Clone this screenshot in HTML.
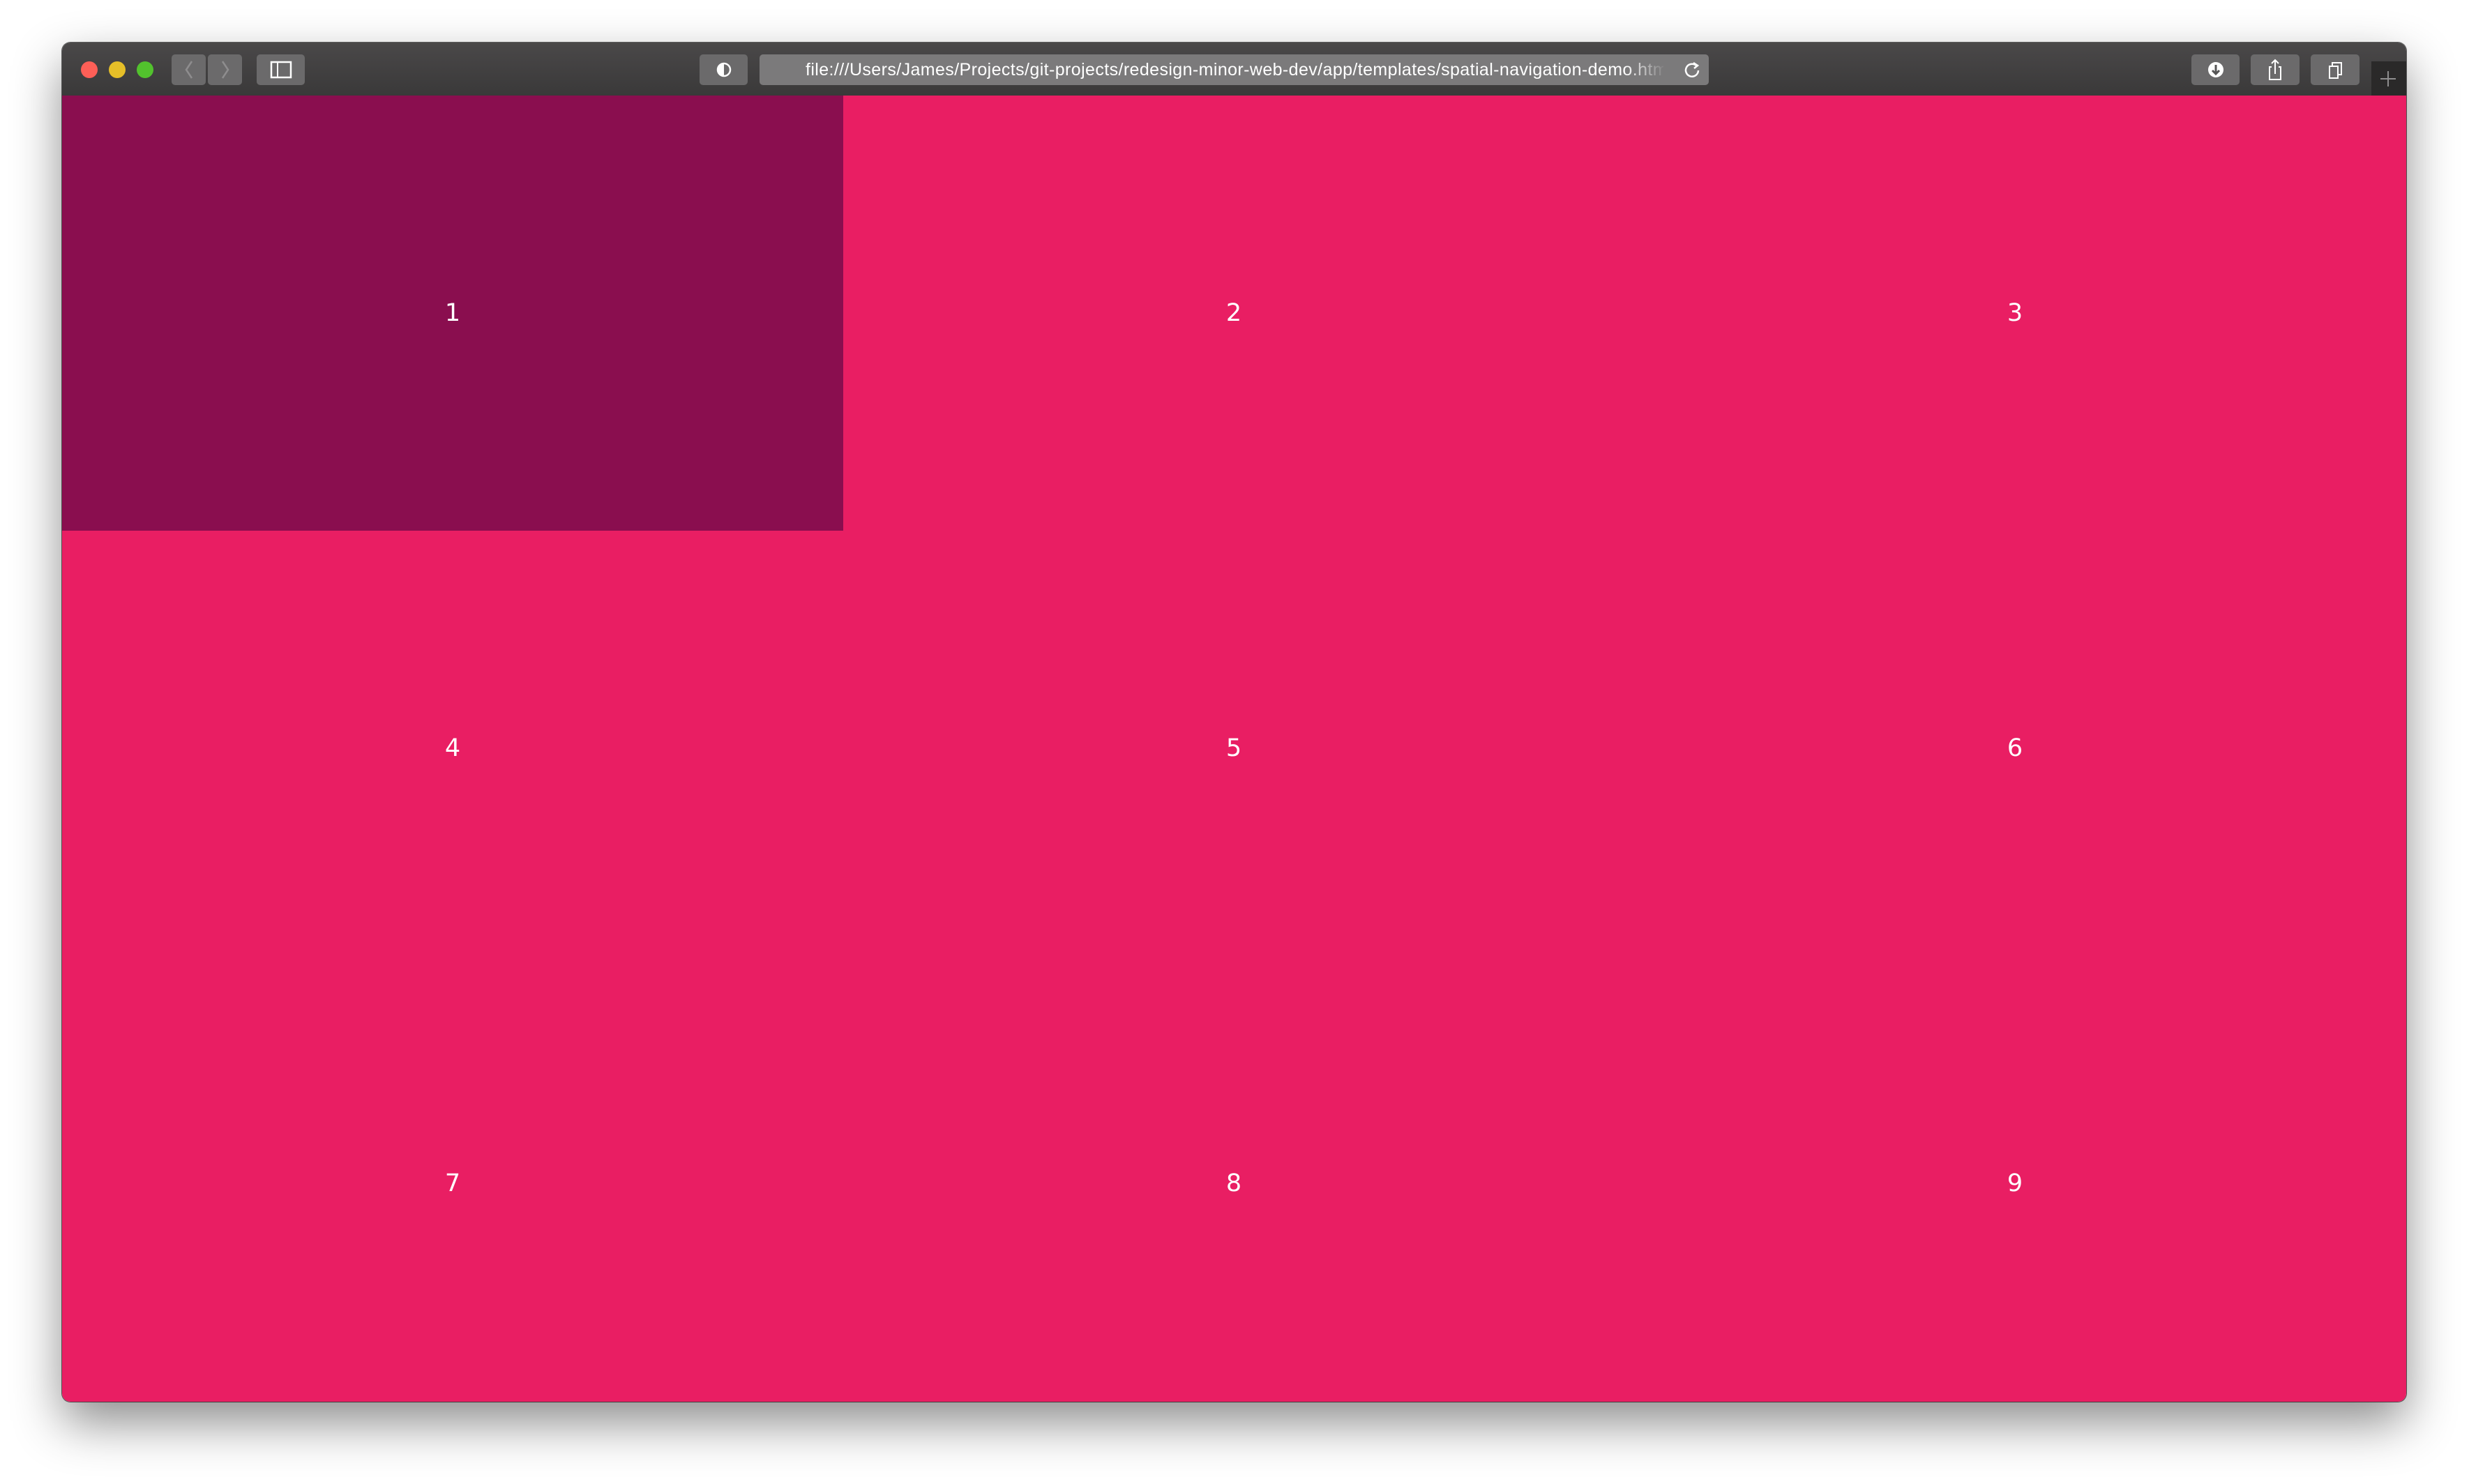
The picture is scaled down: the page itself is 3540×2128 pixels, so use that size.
<!DOCTYPE html>
<html><head><meta charset="utf-8"><style>
html,body{margin:0;padding:0;width:3540px;height:2128px;background:#fff;overflow:hidden;font-family:"Liberation Sans",sans-serif}
.win{position:absolute;left:89px;top:61px;width:3361px;height:1949px;border-radius:12px;overflow:hidden;box-shadow:0 30px 70px rgba(0,0,0,0.45),0 0 0 1px rgba(0,0,0,0.6)}
.bar{position:absolute;left:0;top:0;width:3361px;height:76px;background:linear-gradient(#4a4849,#3a3939);border-bottom:1px solid #111}
.dot{position:absolute;top:27px;width:24px;height:24px;border-radius:50%}
.btn{position:absolute;top:17px;height:44px;background:#6b6a6b;border-radius:5px}
.url{position:absolute;left:1000px;top:17px;width:1361px;height:44px;background:#7b7a7b;border-radius:5px;overflow:hidden}
.url span{position:absolute;left:66px;top:8px;color:#fff;font-size:25px;letter-spacing:0.4px;white-space:nowrap;width:1230px;overflow:hidden}
.url .fade{position:absolute;left:1240px;top:0;width:60px;height:44px;background:linear-gradient(90deg,rgba(123,122,123,0),#7b7a7b)}
.content{position:absolute;left:0;top:76px;width:3361px;height:1873px;background:#e91e63}
.cell{position:absolute;width:1120px;height:624px;display:flex;align-items:center;justify-content:center;color:#fff;font-family:"DejaVu Sans",sans-serif;font-size:35px}
</style></head><body>
<div class="win">
<div class="bar">
<div class="dot" style="left:27px;background:#fe5f57"></div>
<div class="dot" style="left:67px;background:#e6bf28"></div>
<div class="dot" style="left:107px;background:#52c22d"></div>
<div class="btn" style="left:157px;width:49px"><svg width="49" height="44"><path d="M29 10 L21 22 L29 34" stroke="#8e8d8e" stroke-width="2.5" fill="none"/></svg></div>
<div class="btn" style="left:209px;width:49px"><svg width="49" height="44"><path d="M21 10 L29 22 L21 34" stroke="#8e8d8e" stroke-width="2.5" fill="none"/></svg></div>
<div class="btn" style="left:279px;width:69px"><svg width="69" height="44"><rect x="21" y="11" width="28" height="22" stroke="#fff" stroke-width="2.5" fill="none"/><line x1="30" y1="11" x2="30" y2="33" stroke="#fff" stroke-width="2"/></svg></div>
<div class="btn" style="left:914px;width:69px"><svg width="69" height="44"><circle cx="35" cy="22" r="9" stroke="#fff" stroke-width="2.5" fill="none"/><path d="M35 13 A9 9 0 0 0 35 31 Z" fill="#fff"/></svg></div>
<div class="url"><span>file:///Users/James/Projects/git-projects/redesign-minor-web-dev/app/templates/spatial-navigation-demo.htm</span><div class="fade"></div>
<svg style="position:absolute;right:8px;top:6px" width="32" height="32"><path d="M22 10 A9 9 0 1 0 25 17" stroke="#fff" stroke-width="2.5" fill="none"/><path d="M18 6 L24 10 L19 14" stroke="#fff" stroke-width="2.5" fill="none"/></svg></div>
<div class="btn" style="left:3053px;width:69px"><svg width="69" height="44"><circle cx="35" cy="22" r="11" fill="#fff"/><path d="M35 15 V27 M30 23 L35 28 L40 23" stroke="#555" stroke-width="3" fill="none"/></svg></div>
<div class="btn" style="left:3138px;width:70px"><svg width="70" height="44"><path d="M30 18 H27 V36 H43 V18 H40 M35 28 V8 M30 13 L35 8 L40 13" stroke="#fff" stroke-width="2" fill="none"/></svg></div>
<div class="btn" style="left:3224px;width:70px"><svg width="70" height="44"><rect x="27" y="17" width="12" height="17" stroke="#fff" stroke-width="2" fill="none"/><path d="M31 17 V12 H44 V29 H39" stroke="#fff" stroke-width="2" fill="none"/></svg></div>
<div style="position:absolute;left:3311px;top:27px;width:50px;height:49px;background:#2a2929"><svg width="50" height="49"><path d="M24 14 V36 M13 25 H35" stroke="#8e8d8e" stroke-width="2"/></svg></div>
</div>
<div class="content">
<div class="cell" style="left:0;top:0;background:#8a0e4f">1</div>
<div class="cell" style="left:1120px;top:0">2</div>
<div class="cell" style="left:2240px;top:0">3</div>
<div class="cell" style="left:0;top:624px">4</div>
<div class="cell" style="left:1120px;top:624px">5</div>
<div class="cell" style="left:2240px;top:624px">6</div>
<div class="cell" style="left:0;top:1248px">7</div>
<div class="cell" style="left:1120px;top:1248px">8</div>
<div class="cell" style="left:2240px;top:1248px">9</div>
</div>
</div>
</body></html>
